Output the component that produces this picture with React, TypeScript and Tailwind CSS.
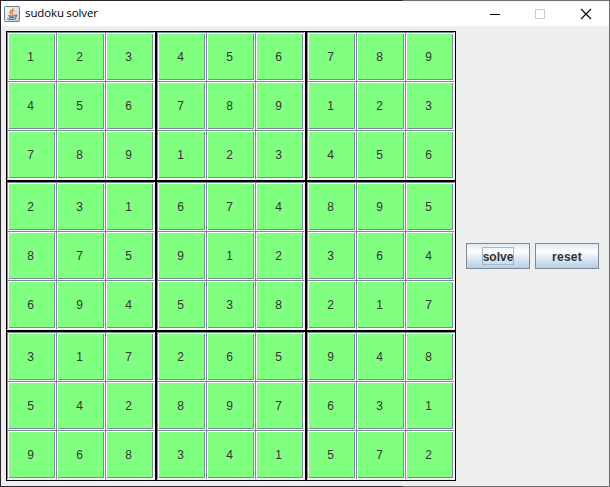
const blocks = [
  '123456789', '456789123', '789123456',
  '231875694', '674912538', '895364217',
  '317542968', '265897341', '948631572',
];

function Cell({ value }: { value: string }) {
  return (
    <div className="h-[49px] w-[49px] bg-[#7a8a99] p-px">
      <div className="h-[48px] w-[48px] bg-white p-px">
        <div className="h-[46px] w-[46px] border-r border-b border-[#7a8a99] bg-[#80ff80] pt-[14px] pr-[2px] text-center text-[12px] leading-[18px] text-[#333333]">
          {value}
        </div>
      </div>
    </div>
  );
}

function Block({ cells }: { cells: string }) {
  return (
    <div className="grid h-[150px] w-[150px] grid-cols-[49px_49px_49px] grid-rows-[49px_49px_49px] border border-black bg-[#eeeeee]">
      {cells.split('').map((value, i) => (
        <Cell key={i} value={value} />
      ))}
    </div>
  );
}

function JavaIcon() {
  return (
    <svg width="16" height="16" viewBox="0 0 16 16" fill="none">
      <defs>
        <linearGradient id="tile" x1="0" y1="0" x2="1" y2="1">
          <stop offset="0" stopColor="#f8fafb" />
          <stop offset="1" stopColor="#c3ced6" />
        </linearGradient>
      </defs>
      <rect x="0.5" y="0.5" width="15" height="15" rx="0.7" fill="url(#tile)" stroke="#6c8292" />
      <path d="M9 2C9.6 4 5.7 4.6 6 6.3c.1.8.8 1.3 1.2 2.2M10.4 4.4C7.6 5.4 7.8 6.1 8.4 6.9c.4.6.2 1.1-.3 1.7" stroke="#ed8122" strokeWidth="1.3" />
      <path d="M4.4 9.4c1.5.8 4.6.7 6.4 0M5.2 11.2c1.5.6 3.6.6 5.1 0M3.3 12.8c2.2 1.1 6.5 1 8.8-.2M10.8 9.1c2.3-.6 2.4 1.4.3 2.2" stroke="#3f6d8f" strokeWidth="1.1" />
    </svg>
  );
}

function Button({ label, focused = false }: { label: string; focused?: boolean }) {
  return (
    <button className="flex h-[26px] w-[64px] items-center justify-center border border-[#7a8a99] bg-[linear-gradient(#dde8f3_0%,#ffffff_30%,#dde8f3_60%,#b8cfe5_100%)] text-[12px] leading-[16px] font-bold text-[#333333]">
      <span
        className={
          focused
            ? 'flex h-[18px] w-[32px] items-center justify-center border border-[#a3b8cc] pt-[2px]'
            : 'pt-[2px] tracking-[0.25px]'
        }
      >
        {label}
      </span>
    </button>
  );
}

export default function App() {
  return (
    <div className="h-[487px] w-[610px] bg-[linear-gradient(90deg,#29272b_0px,#29272b_402px,#6e6e70_403px)] p-px font-['Liberation_Sans',Arial,sans-serif]">
      <div className="flex h-full flex-col bg-[#eeeeee]">
        <header className="flex h-[25px] shrink-0 items-center bg-white pl-[3px]">
          <JavaIcon />
          <span className="ml-[5px] pb-px font-['Open_Sans','Noto_Sans',sans-serif] text-[11.5px] leading-[16px] tracking-[-0.1px] [word-spacing:-0.5px] text-black">
            sudoku solver
          </span>
          <svg className="ml-auto" width="119" height="24" viewBox="0 0 119 24" fill="none" shapeRendering="crispEdges">
            <path d="M0 12.5h10" stroke="#000" />
            <path d="M45.5 7.5h9v9h-9z" stroke="#ccc" />
            <path d="M91 7l10 10M101 7L91 17" stroke="#000" shapeRendering="auto" strokeWidth="1.1" />
          </svg>
        </header>
        <main className="flex pt-[5px] pl-[5px]">
          <section className="grid h-[450px] w-[450px] grid-cols-[150px_150px_150px]">
            {blocks.map((cells, i) => (
              <Block key={i} cells={cells} />
            ))}
          </section>
          <aside className="ml-[10px] flex items-center gap-[5px]">
            <Button label="solve" focused />
            <Button label="reset" />
          </aside>
        </main>
      </div>
    </div>
  );
}
